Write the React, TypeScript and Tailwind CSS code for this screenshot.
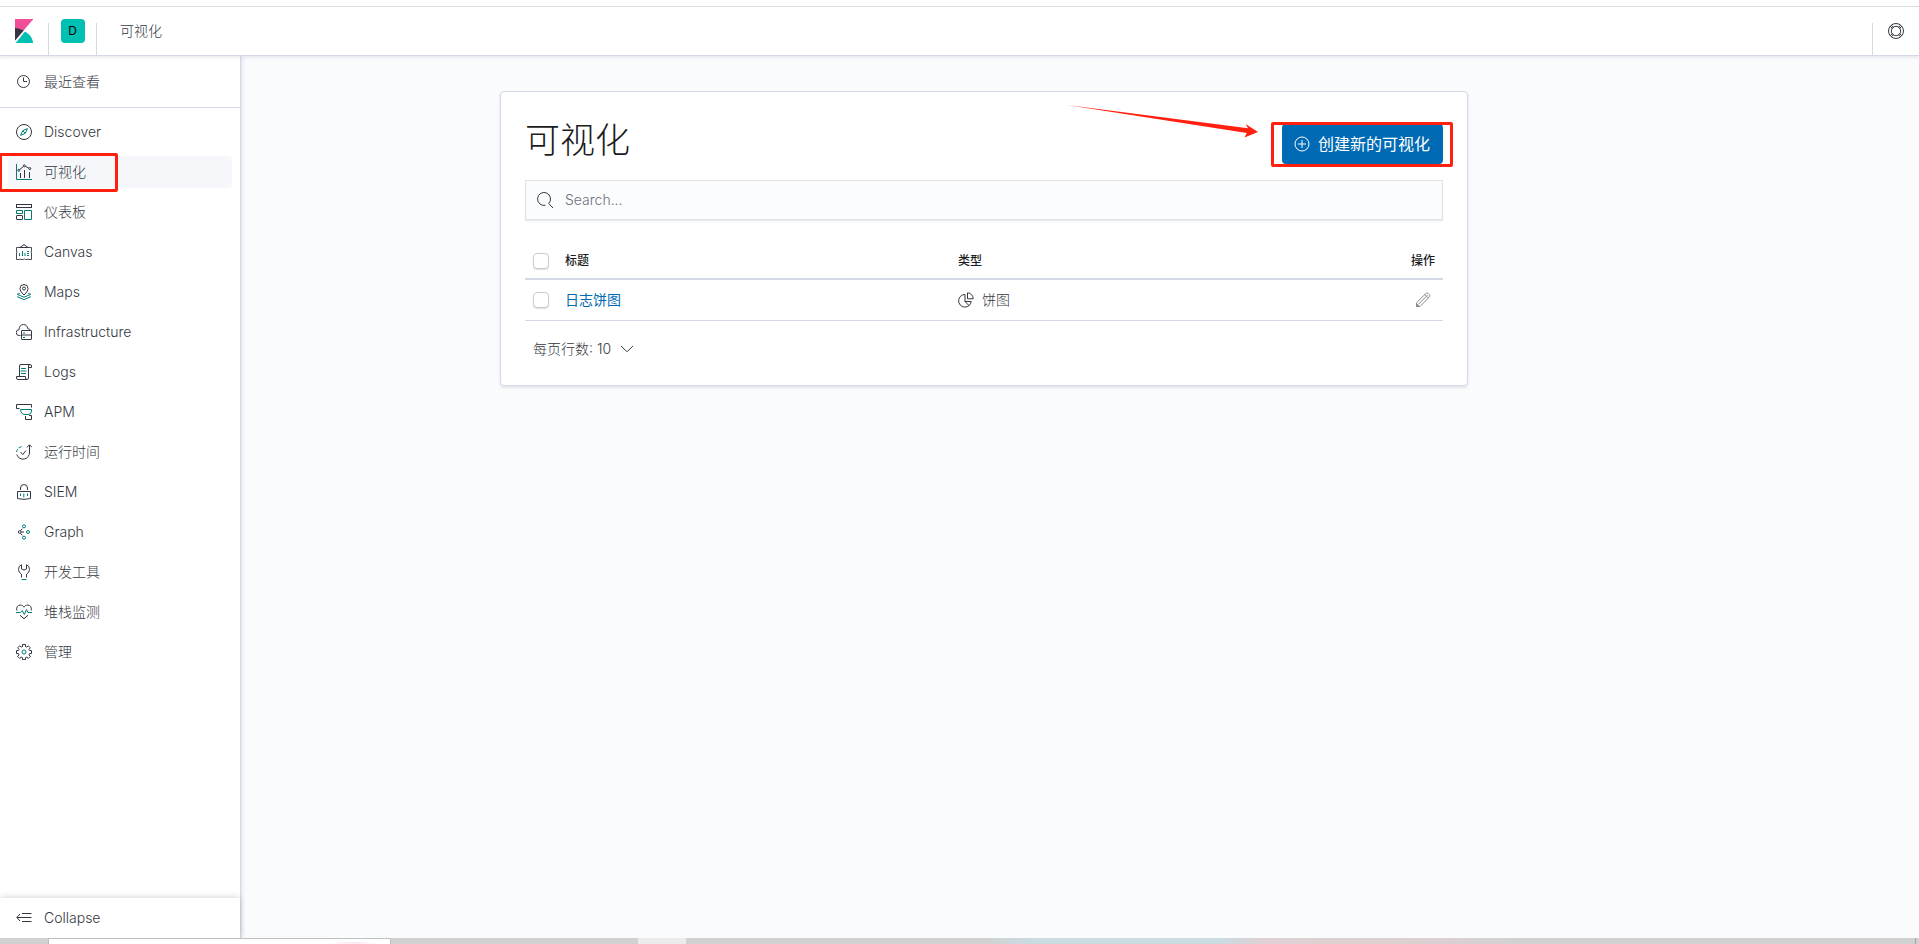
import type { ComponentType, ReactNode } from "react";

const navItems = [
  { label: "Discover", icon: DiscoverIcon },
  { label: "可视化", icon: VisualizeIcon, active: true },
  { label: "仪表板", icon: DashboardIcon },
  { label: "Canvas", icon: CanvasIcon },
  { label: "Maps", icon: MapsIcon },
  { label: "Infrastructure", icon: InfraIcon },
  { label: "Logs", icon: LogsIcon },
  { label: "APM", icon: ApmIcon },
  { label: "运行时间", icon: UptimeIcon },
  { label: "SIEM", icon: SiemIcon },
  { label: "Graph", icon: GraphIcon },
  { label: "开发工具", icon: DevToolsIcon },
  { label: "堆栈监测", icon: MonitoringIcon },
  { label: "管理", icon: ManagementIcon },
];

const visualizations = [{ title: "日志饼图", type: "饼图" }];

export default function App() {
  return (
    <div className="flex min-h-screen flex-col bg-[#fafbfd] font-['Inter','Noto_Sans_CJK_SC',sans-serif] text-sm font-light text-[#343741]">
      <TopBar />
      <div className="flex flex-1">
        <SideNav />
        <main className="min-w-0 flex-1 pt-[35px] pr-48">
          <ListingPanel />
        </main>
      </div>
      <Taskbar />
    </div>
  );
}

function TopBar() {
  return (
    <div className="relative z-20 bg-white pt-[6px]">
      <header className="flex h-[50px] items-center border-y border-t-[#dcdcdc] border-b-[#d3dae6] bg-white shadow-[0_2px_3px_rgba(152,162,179,0.2)]">
        <a href="#home" aria-label="Kibana" className="flex w-12 justify-center">
          <KibanaLogo />
        </a>
        <span className="h-8 w-px self-end bg-[#d3dae6]" />
        <button aria-label="Default space" className="flex w-[47px] justify-center">
          <span className="flex h-6 w-6 items-center justify-center rounded bg-[#00bfb3] text-xs font-normal text-black">D</span>
        </button>
        <span className="h-8 w-px self-end bg-[#d3dae6]" />
        <span className="pl-[23px] leading-5">可视化</span>
        <span className="ml-auto h-8 w-px self-end bg-[#d3dae6]" />
        <button aria-label="Help" className="flex w-[46px] justify-center">
          <HelpIcon />
        </button>
      </header>
    </div>
  );
}

function SideNav() {
  return (
    <nav className="relative z-10 flex w-[241px] shrink-0 flex-col border-r border-[#d3dae6] bg-white shadow-[2px_0_3px_rgba(152,162,179,0.2)]">
      <div className="h-[52px] border-b border-[#d3dae6] pt-1.5">
        <NavLink label="最近查看" icon={ClockIcon} />
      </div>
      <ul className="pt-1">
        {navItems.map((item) => (
          <li key={item.label} className="relative">
            <NavLink {...item} />
            {item.active && (
              <span className="absolute top-px -left-px h-[39px] w-[119px] rounded-xs border-[3px] border-[#ff2010]" />
            )}
          </li>
        ))}
      </ul>
      <div className="mt-auto shadow-[0_-1px_6px_rgba(0,0,0,0.16)]">
        <NavLink label="Collapse" icon={CollapseIcon} />
      </div>
    </nav>
  );
}

function NavLink({ label, icon: Icon, active }: { label: string; icon: ComponentType; active?: boolean }) {
  return (
    <a href="#nav" className="block px-2 py-1">
      <span className={`flex h-8 items-center gap-3 rounded px-2 ${active ? "bg-[#f5f7fa]" : ""}`}>
        <Icon />
        <span className="leading-5">{label}</span>
      </span>
    </a>
  );
}

function ListingPanel() {
  return (
    <section className="mx-auto max-w-[968px] rounded border border-[#d3dae6] bg-white px-6 pt-6 pb-5 shadow-[0_2px_3px_rgba(152,162,179,0.25)]">
      <div className="relative flex h-12 items-center justify-between">
        <h1 className="text-[35px] leading-10 text-[#1a1c21]">可视化</h1>
        <RedArrow />
        <div className="relative self-end">
          <button className="flex h-10 items-center gap-2 rounded bg-[#006bb4] pr-[13px] pl-3 text-base font-normal text-white">
            <PlusCircleIcon />
            创建新的可视化
          </button>
          <span className="pointer-events-none absolute -top-0.5 -right-2.5 -bottom-[3px] -left-[11px] rounded-xs border-[3px] border-[#ff2010]" />
        </div>
      </div>

      <label className="mt-4 flex h-10 items-center gap-3 border border-[#dfe1e5] bg-[#fbfcfd] px-[11px] shadow-[0_2px_2px_-1px_rgba(152,162,179,0.3)]">
        <SearchIcon />
        <input
          type="search"
          aria-label="Search"
          placeholder="Search..."
          className="min-w-0 flex-1 bg-transparent outline-none placeholder:text-[#6a717d]"
        />
      </label>

      <table className="mt-[23px] w-full table-fixed text-left">
        <colgroup>
          <col className="w-8" />
          <col />
          <col />
          <col className="w-[100px]" />
        </colgroup>
        <thead>
          <tr className="h-9 border-b-2 border-[#d3dae6] text-xs text-[#1a1c21]">
            <th className="pl-2"><Checkbox label="Select all rows" /></th>
            <th className="px-2 font-medium">标题</th>
            <th className="px-2 font-medium">类型</th>
            <th className="px-2 text-right font-medium">操作</th>
          </tr>
        </thead>
        <tbody>
          {visualizations.map((row) => (
            <tr key={row.title} className="h-[41px] border-b border-[#d3dae6]">
              <td className="pl-2"><Checkbox label={`Select ${row.title}`} /></td>
              <td className="px-2"><a href="#vis" className="font-normal text-[#006bb4]">{row.title}</a></td>
              <td className="px-2">
                <span className="flex items-center gap-2">
                  <PieIcon />
                  {row.type}
                </span>
              </td>
              <td className="px-3">
                <button aria-label="Edit" className="ml-auto block"><PencilIcon /></button>
              </td>
            </tr>
          ))}
        </tbody>
      </table>

      <button className="mt-3 flex h-8 items-center gap-2 px-2">
        每页行数: 10
        <svg width="16" height="16" viewBox="0 0 16 16" fill="none" stroke="currentColor">
          <path d="M2.3 5.2l5 5q.7.6 1.4 0l5-5" strokeLinecap="round" />
        </svg>
      </button>
    </section>
  );
}

function Checkbox({ label }: { label: string }) {
  return (
    <input
      type="checkbox"
      aria-label={label}
      className="block h-4 w-4 appearance-none rounded border border-[#c9cbcd] bg-white shadow-[0_1px_1px_rgba(0,0,0,0.12)] checked:bg-[#006bb4]"
    />
  );
}

function RedArrow() {
  return (
    <svg className="pointer-events-none absolute -top-3 right-[184px]" width="194" height="36" viewBox="0 0 194 36" fill="#ff2010">
      <path d="M2 1L183 24.3l-2.4-4.3 12.4 8-13.5 5.4 2.3-4.5Z" />
    </svg>
  );
}

// Top edge of the desktop taskbar under the browser window
function Taskbar() {
  return (
    <div className="relative z-20 flex h-[6px] bg-[#d1d1d1]">
      <div className="w-12" />
      <div className="flex w-[343px] justify-end border border-b-0 border-[#bfbfbf] bg-white pt-[3px]">
        <div className="mr-3 w-12 bg-linear-to-r from-white via-[#fde6f3] to-white" />
      </div>
      <div className="w-[247px]" />
      <div className="w-12 bg-[#ececec]" />
      <div className="w-[300px]" />
      <div className="flex-1 bg-linear-to-r from-[#d1d1d1] via-[#cadbe2] via-20% to-[#cadbe2]" />
      <div className="flex-1 bg-linear-to-r from-[#cadbe2] via-[#dfd1d3] via-20% to-[#dbd0d1]" />
      <div className="flex-[2] bg-linear-to-r from-[#dbd0d1] to-[#d1d1d1] to-15%" />
      <div className="w-1 border-l border-[#a5a5a5]" />
    </div>
  );
}

// ── Icons ────────────────────────────────────────────────────────────────────
const TEAL = "#017d73";

function AppIcon({ children }: { children: ReactNode }) {
  return (
    <svg className="shrink-0" width="16" height="16" viewBox="0 0 16 16" fill="none" stroke="currentColor">
      {children}
    </svg>
  );
}
function KibanaLogo() {
  return (
    <svg width="18" height="24" viewBox="0 0 18 24">
      <path d="M0 0v21.5L18.5 0z" fill="#f04e98" />
      <path d="M0 9v12.5l8.6-10A16 16 0 0 0 0 9z" fill="#343741" />
      <path d="M10 12.6L.7 24h17.6a16.3 16.3 0 0 0-8.3-11.4z" fill="#00bfb3" />
    </svg>
  );
}
function HelpIcon() {
  return (
    <AppIcon>
      <circle cx="8" cy="8" r="7.5" />
      <circle cx="8" cy="8" r="4.7" />
      <path d="M3.400 2.200l2.300 2.500M2.200 3.400l2.500 2.300M12.600 2.200l-2.300 2.500M13.800 3.400l-2.500 2.300M3.400 13.800l2.300-2.500M2.200 12.600l2.500-2.300M12.600 13.800l-2.300-2.500M13.800 12.600l-2.500-2.300" />
    </AppIcon>
  );
}
function ClockIcon() {
  return (
    <AppIcon>
      <circle cx="7.5" cy="7.5" r="6" />
      <path d="M7.5 3.5v4h3.5" />
    </AppIcon>
  );
}
function DiscoverIcon() {
  return (
    <AppIcon>
      <circle cx="8" cy="8" r="7.5" />
      <path d="M11.4 4.6L9.3 9.3 4.6 11.4l2.1-4.7zM6.9 6.9l2.2 2.2" stroke={TEAL} />
    </AppIcon>
  );
}
function VisualizeIcon() {
  return (
    <AppIcon>
      <path d="M.5 0v15.5H16" stroke={TEAL} />
      <path d="M4.5 9v5M8.5 6v8M13.5 8v6M3.4 5.7l3.9-3M9.4 2.3l3.5 1.9" />
      <circle cx="2.8" cy="6.3" r="1" />
      <circle cx="8.3" cy="1.8" r="1" />
      <circle cx="13.8" cy="4.6" r="1" />
    </AppIcon>
  );
}
function DashboardIcon() {
  return (
    <AppIcon>
      <rect x=".5" y=".5" width="15" height="3" />
      <rect x=".5" y="11.5" width="6" height="4" rx=".5" />
      <path d="M.5 6.5h6v3h-6zM8.5 6.5h7v9h-7z" stroke={TEAL} />
    </AppIcon>
  );
}
function CanvasIcon() {
  return (
    <AppIcon>
      <path d="M4.5 3.5h-4V7q1 1 0 2v6.5H3q1-1 2 0h2.500q1-1 2 0H11q1-1 2 0h2.500V9q-1-1 0-2V3.500h-4" strokeWidth=".9" />
      <path d="M4 3.500L7 1.200a1.500 1.500 0 0 1 2 0l3 2.300z" />
      <path d="M3.500 9v3M6.500 7v5M9 9v3M11 7.500h2M11 9.500h2M11 11.500h2" stroke={TEAL} />
    </AppIcon>
  );
}
function MapsIcon() {
  return (
    <AppIcon>
      <path d="M8 11C5 8 4 6.400 4 4.500a4 4 0 0 1 8 0C12 6.400 11 8 8 11z" />
      <circle cx="8" cy="4.500" r="1.500" />
      <path d="M3.800 9.300L1.200 10.300 8 13.200l6.800-2.900-2.600-1M1 12.700l7 2.900 7-2.900" stroke={TEAL} />
    </AppIcon>
  );
}
function InfraIcon() {
  return (
    <AppIcon>
      <path d="M4.500 11.500H3.200A2.900 2.900 0 0 1 3 5.700C3 2.500 5 .5 7.500.5s4 1.800 4.300 4.200q2.200.2 2.800 1.800" />
      <rect x="5.500" y="6.500" width="10" height="9" rx=".5" />
      <path d="M5.500 11h10" />
      <path d="M7 9h2M7 13.500h2" stroke={TEAL} />
    </AppIcon>
  );
}
function LogsIcon() {
  return (
    <AppIcon>
      <path d="M3.500 12.500V2A1.500 1.500 0 0 1 5 .5h9A1.500 1.500 0 0 1 15.500 2v1.500h-3M12.500 2v12A1.500 1.500 0 0 1 11 15.500H2A1.500 1.500 0 0 1 .5 14v-1.500h9V14q0 1.500 1.500 1.500M14 .5Q12.500.5 12.500 2" />
      <path d="M5 4.500h5M4.500 7h6M5 9.500h5" stroke={TEAL} />
    </AppIcon>
  );
}
function ApmIcon() {
  return (
    <AppIcon>
      <path d="M3.500 4.500h-3v-4h15v3M9.500 12v3.500h6v-4H13" />
      <path d="M4.500 5.500h11v1.500q0 3.500-3.500 3.500H9q-4 0-4.500-5z" stroke={TEAL} />
    </AppIcon>
  );
}
function UptimeIcon() {
  return (
    <AppIcon>
      <path d="M13.500 1v7A6.500 6.500 0 0 1 .8 10.500M10.800 3.500L13.500.8l2.700 2.700M4.500 8l2.300 2.500L10 6.500" />
      <path d="M.6 8A6.500 6.500 0 0 1 7 2.500" stroke={TEAL} strokeDasharray="3 1.500" />
    </AppIcon>
  );
}
function SiemIcon() {
  return (
    <AppIcon>
      <path d="M4.500 6V4a3.500 3.500 0 0 1 7 0v2M1.500 7.500h13v7q-6.500 1.800-13 0z" />
      <path d="M4.500 9.500V12M7.800 9.500v4M11.500 9.500V12" stroke={TEAL} />
    </AppIcon>
  );
}
function GraphIcon() {
  return (
    <AppIcon>
      <circle cx="3.800" cy="8" r="1.400" />
      <path d="M5.200 8H8M4.500 6.700l1.800-2M4.500 9.300l1.800 2" />
      <g stroke={TEAL}>
        <circle cx="8" cy="2.300" r="1.500" />
        <circle cx="12" cy="8" r="1.500" />
        <circle cx="8" cy="13.700" r="1.500" />
      </g>
    </AppIcon>
  );
}
function DevToolsIcon() {
  return (
    <AppIcon>
      <path d="M5.500 13.500v-3.200Q2.500 8.500 2.500 5.500q0-3.600 3-4.800V5L8 6l2.500-1V.7q3 1.200 3 4.800 0 3-3 4.800v3.200" />
      <path d="M5.500 15.500h5" stroke={TEAL} />
    </AppIcon>
  );
}
function MonitoringIcon() {
  return (
    <AppIcon>
      <path d="M.8 6.500C0 3 2 1 4.300 1 6 1 7.300 2 8 3.200 8.700 2 10 1 11.700 1 14 1 16 3 15.200 6.500M4 11.200l4 3.600 4-3.600" />
      <path d="M0 8.500h4.500l1.800-2 2 4 2.200-5 1.500 3h4" stroke={TEAL} />
    </AppIcon>
  );
}
function ManagementIcon() {
  return (
    <AppIcon>
      <path d="M6.500.5h3v2l1.300.6 1.500-1.300 2 2-1.300 1.600.5 1.200h2v3h-2l-.5 1.300 1.300 1.500-2 2-1.500-1.300-1.300.5v2h-3v-2l-1.300-.5-1.500 1.300-2-2L3 10.900l-.5-1.300h-2v-3h2L3 5.400 1.700 3.800l2-2 1.500 1.300 1.300-.6z" strokeLinejoin="round" />
      <circle cx="8" cy="8" r="2" stroke={TEAL} />
    </AppIcon>
  );
}
function CollapseIcon() {
  return (
    <AppIcon>
      <path d="M6 3.500h9.500M1 7.500h14.500M6 11.500h9.500M4 4L.8 7.500 4 11" />
    </AppIcon>
  );
}
function SearchIcon() {
  return (
    <AppIcon>
      <path d="M8.500 13.300A6.500 6.500 0 1 1 11.700 11.500L16 16" />
    </AppIcon>
  );
}
function PlusCircleIcon() {
  return (
    <AppIcon>
      <circle cx="8" cy="8" r="7" />
      <path d="M8 4v8M4 8h8" />
    </AppIcon>
  );
}
function PieIcon() {
  return (
    <AppIcon>
      <path d="M7 2.500A6.300 6.300 0 1 0 13.200 9.500H7zM7 9.500l4.200 4.300" />
      <path d="M9.500.8v6h5.700A6 6 0 0 0 9.500.8z" />
    </AppIcon>
  );
}
function PencilIcon() {
  return (
    <svg width="16" height="16" viewBox="0 0 16 16" fill="none" stroke="#8b8b8b">
      <path d="M1.500 14.500v-3.700L11.200 1.200q.8-.8 1.600 0l1.800 1.800q.8.8 0 1.600L5 14.500zM3.500 12.200l9-9M9.800 2.600l3.500 3.500" />
      <path d="M1.500 11.500l3 3h-3z" fill="#8b8b8b" />
    </svg>
  );
}
